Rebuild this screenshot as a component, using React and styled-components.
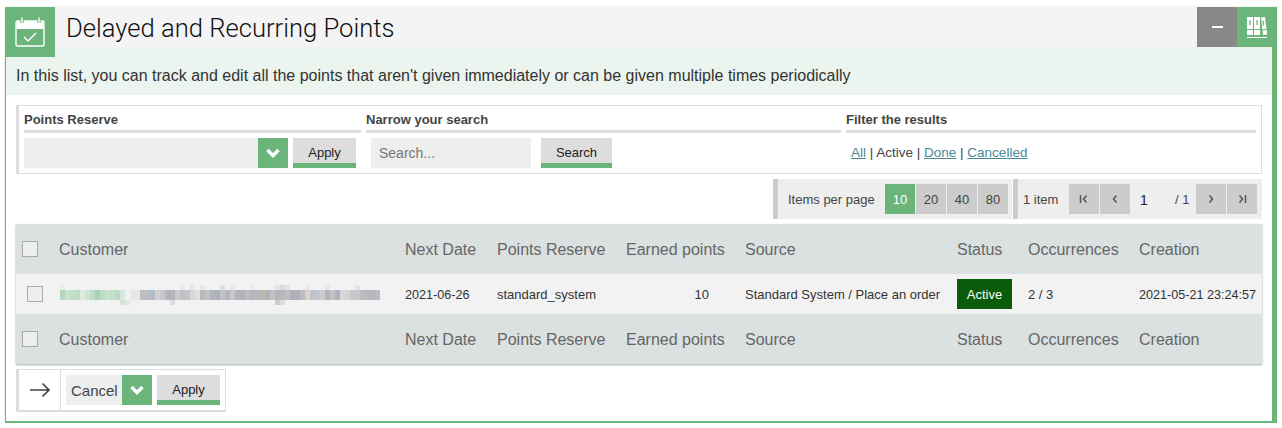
import styled, { createGlobalStyle } from "styled-components";

const green = "#6cb57a";

const GlobalStyle = createGlobalStyle`
  html, body {
    margin: 0;
    padding: 0;
    background: #fff;
    font-family: "Liberation Sans", Arial, sans-serif;
    color: #333;
  }
  * { box-sizing: border-box; }
`;

const columns = ["Customer", "Next Date", "Points Reserve", "Earned points", "Source", "Status", "Occurrences", "Creation"];

// the customer name is pixelated in the screenshot, one colour per 5px block
const blurTop = {
  0: "#e6efe8", 24: "#e8e8e8", 26: "#e4e4e6", 28: "#e6e6e8", 32: "#e2e2e4",
  34: "#e4e6ea", 38: "#ebebeb", 43: "#e4e4e8", 44: "#dadade", 45: "#e4e4e8",
  49: "#e8e8ea", 53: "#e6e8ec", 59: "#dfe3ea",
};
const blurMain = [
  "#b4d8bc", "#c8e3ce", "#c4e0cb", "#c0dcc8", "#dfeae1", "#cfe5d4", "#bedcc6", "#a9d3b4",
  "#bcdcc4", "#c8e2cf", "#c6e0cd", "#bedac6", "#d6e6e2", "#f2f2f2", "#e6e6e6", "#e6e8ea",
  "#c3bcba", "#b9bfc8", "#b3bbc6", "#d0cfce", "#c8c8cc", "#b4b4ba", "#b4b6bc", "#c4ccd2",
  "#c0c0c4", "#c8c4c2", "#d4d8de", "#dce0e4", "#bfbab8", "#c0c4c8", "#b2b5bc", "#acb2bc",
  "#c0c4ca", "#b8b8bc", "#c4c8cc", "#b2b4ba", "#b2b2b6", "#bcbcc0", "#b0b6be", "#b4b8c0",
  "#bcb8b2", "#b0b6c0", "#c0c2c4", "#b0b6bc", "#b8b8bc", "#bebebe", "#b0b0b6", "#aab0bc",
  "#bcbcc0", "#d8d4ce", "#c0c4c8", "#bfc8d2", "#c8ccd0", "#b8b4b2", "#c0c4c8", "#aeb4c0",
  "#d8d8da", "#d4d4d6", "#c8c8c8", "#c4c8cc", "#b8bcc4", "#bcb8b8", "#b4b8c0", "#b8bcc4",
];
const blurBottom = { 12: "#cfe4d6", 13: "#dbe9e2", 22: "#ddd", 43: "#ccc", 44: "#ddd" };

const BlurredName = () => (
  <svg width="320" height="20" viewBox="0 0 320 20" shapeRendering="crispEdges">
    {Object.entries(blurTop).map(([i, c]) => (
      <rect key={i} x={i * 5} y="0" width="5" height="5" fill={c} />
    ))}
    {blurMain.map((c, i) => (
      <rect key={i} x={i * 5} y="5" width="5" height="10" fill={c} />
    ))}
    {Object.entries(blurBottom).map(([i, c]) => (
      <rect key={i} x={i * 5} y="15" width="5" height="5" fill={c} />
    ))}
  </svg>
);

const CalendarIcon = () => (
  <svg width="30" height="30" viewBox="0 0 30 30" fill="none">
    <path d="M1.500 5.500a1.500 1.500 0 0 1 1.500-1.500h24a1.500 1.500 0 0 1 1.500 1.500v6.500h-27z" fill="#fff" />
    <rect x="1" y="4" width="28" height="25" rx="1.5" stroke="#fff" strokeWidth="1.4" />
    <path d="M7 1v5M24 1v5" stroke="#6cb57a" strokeWidth="3.4" />
    <path d="M7 1v4.500M24 1v4.500" stroke="#fff" strokeWidth="1.4" strokeLinecap="round" />
    <path d="M9 20l4 4 8-8" stroke="#fff" strokeWidth="1.5" />
  </svg>
);

const BooksIcon = () => (
  <svg width="20" height="21" viewBox="0 0 20 21">
    <path d="M0 0h6v12H0zM0 13h6v5H0zM7 0h6v12H7zM7 13h6v5H7z" fill="#fff" />
    <path d="M14 0.500l4-.5 1.600 12-4.200.6zM15.600 13.600l4.200-.6.200 4.600-4 .4z" fill="#fff" />
    <path d="M3 3v5M10 3v5M16 3.500l.6 5" stroke={green} strokeWidth="1.3" />
    <path d="M0 20.500h20" stroke="#fff" strokeWidth="1" />
  </svg>
);

const ChevronIcon = () => (
  <svg width="14" height="10" viewBox="0 0 14 10" fill="none" stroke="#fff" strokeWidth="3.400">
    <path d="M1.500 2l5.500 5.500L12.500 2" />
  </svg>
);

const PageIcon = ({ dir, end }) => (
  <svg width="10" height="10" viewBox="0 0 10 10" fill="none" stroke="#555" strokeWidth="1.5">
    <g transform={dir === "left" ? "" : "matrix(-1 0 0 1 10 0)"}>
      <path d={end ? "M7.500 1.500L4.500 5l3 3.500" : "M6.500 1.500L3.500 5l3 3.500"} />
      {end && <path d="M1.500 1v8" />}
    </g>
  </svg>
);

const ArrowIcon = () => (
  <svg width="22" height="16" viewBox="0 0 22 16" fill="none" stroke="#3f444b" strokeWidth="1.7">
    <path d="M1 8h19M13.500 1.500L20 8l-6.500 6.500" />
  </svg>
);

const Panel = styled.div`
  position: relative;
  width: 1272px;
  margin: 6px 0 0 5px;
  box-shadow: 0 1px 2px rgba(0, 0, 0, 0.15);
`;

const Header = styled.header`
  display: flex;
  align-items: stretch;
  height: 41px;
  padding-left: 61px;
  padding-top: 1px;
  background: #f4f4f4;
`;

const IconBadge = styled.div`
  position: absolute;
  left: 0;
  top: 1px;
  width: 50px;
  height: 50px;
  display: flex;
  align-items: center;
  justify-content: center;
  background: ${green};
`;

const Title = styled.h1`
  flex: 1;
  margin: 0;
  font-family: Roboto, "Liberation Sans", sans-serif;
  font-size: 25.6px;
  font-weight: 300;
  line-height: 43px;
  color: #111;
`;

const HeaderButton = styled.div`
  width: 40px;
  display: flex;
  align-items: center;
  justify-content: center;
  background: ${(p) => p.$bg};
`;

const Dash = styled.span`
  width: 11px;
  height: 2px;
  background: #fff;
`;

const Body = styled.div`
  height: 376px;
  border-left: 1px solid ${green};
  border-right: 5px solid ${green};
  border-bottom: 2px solid ${green};
  background: #fff;
`;

const Description = styled.p`
  margin: 0;
  height: 48px;
  padding-left: 10px;
  background: #ebf4ee;
  font-size: 16px;
  line-height: 58px;
  color: #333;
`;

const Content = styled.div`
  display: flex;
  flex-direction: column;
  padding: 10px 10px 0;
`;

const FilterBox = styled.section`
  display: flex;
  height: 69px;
  padding-left: 5px;
  border: 1px solid #ddd;
  border-left-width: 3px;
`;

const FilterColumn = styled.div`
  width: ${(p) => p.$width}px;
  margin-right: ${(p) => p.$gap || 0}px;
`;

const FilterHeading = styled.h3`
  height: 27px;
  margin: 0;
  padding-top: 1px;
  border-bottom: 3px solid #ddd;
  font-size: 13px;
  line-height: 26px;
  font-weight: 700;
  color: #444;
`;

const FilterRow = styled.div`
  display: flex;
  align-items: center;
  padding-top: 5px;
  padding-left: ${(p) => p.$inset || 0}px;
`;

const SelectField = styled.div`
  width: ${(p) => p.$width}px;
  height: 30px;
  display: flex;
  align-items: center;
  padding-left: 5px;
  background: #eee;
  font-size: 15px;
  color: #444;
`;

const Chevron = styled.div`
  width: 30px;
  height: 30px;
  display: flex;
  align-items: center;
  justify-content: center;
  background: ${green};
`;

const Button = styled.button`
  width: ${(p) => p.$width}px;
  height: 30px;
  margin-left: ${(p) => p.$left}px;
  padding: 3px 0 0;
  border: 0;
  border-bottom: 5px solid ${green};
  background: #ddd;
  font-family: inherit;
  font-size: 13px;
  color: #222;
`;

const SearchInput = styled.div`
  width: 160px;
  height: 30px;
  padding: 1px 0 0 8px;
  background: #eee;
  font-size: 14px;
  line-height: 29px;
  color: #777;
`;

const Links = styled.div`
  padding: 12px 0 0 5px;
  font-size: 13.5px;
  line-height: 16px;
  color: #444;
  a {
    color: #4a8a96;
    text-decoration: underline;
  }
`;

const Pager = styled.div`
  display: flex;
  justify-content: flex-end;
  margin-top: 5px;
`;

const PagerBlock = styled.div`
  display: flex;
  align-items: center;
  width: ${(p) => p.$width}px;
  margin-left: ${(p) => p.$left || 0}px;
  height: 40px;
  padding-left: ${(p) => p.$pad}px;
  border-left: 5px solid #ccc;
  background: #eee;
  font-size: 13px;
  color: #444;
`;

const PagerLabel = styled.span`
  width: ${(p) => p.$width}px;
  padding-top: 1px;
`;

const PageNumber = styled(PagerLabel)`
  padding-left: 9px;
  font-size: 14px;
  color: #222;
`;

const PageButton = styled.div`
  width: 30px;
  height: 30px;
  margin-right: 1px;
  display: flex;
  align-items: center;
  justify-content: center;
  background: ${(p) => (p.$active ? green : "#ccc")};
  color: ${(p) => (p.$active ? "#fff" : "#444")};
  font-size: 13px;
`;

const Table = styled.table`
  width: 1246px;
  margin-top: 5px;
  border-collapse: collapse;
  table-layout: fixed;
  box-shadow: 0 1px 2px rgba(0, 0, 0, 0.35);
`;

const Col = styled.col`
  width: ${(p) => p.$width}px;
`;

const HeadRow = styled.tr`
  height: 50px;
  background: #dbe0e0;
  font-size: 16px;
  color: #666;
`;

const DataRow = styled.tr`
  height: 40px;
  background: #f2f2f2;
  font-size: 13px;
  color: #333;
`;

const Cell = styled.td`
  padding: 1px 0 0;
  font-weight: 400;
  text-align: left;
  white-space: nowrap;
`;

const DateCell = styled(Cell)`
  font-size: 12.6px;
`;

const NumberCell = styled(Cell)`
  padding-right: 36px;
  text-align: right;
`;

const CheckCell = styled(Cell)`
  padding: 0 0 0 ${(p) => p.$inset}px;
`;

const NameWrap = styled.div`
  display: flex;
  padding: 2px 0 0 1px;
`;

const Checkbox = styled.div`
  width: 16px;
  height: 16px;
  border: 1px solid #aaa;
  background: #eee;
`;

const StatusBadge = styled.span`
  display: inline-flex;
  align-items: center;
  justify-content: center;
  width: 55px;
  height: 30px;
  background: #0a5c0a;
  color: #fff;
`;

const ActionBar = styled.div`
  display: flex;
  align-items: center;
  width: 210px;
  height: 43px;
  margin-top: 5px;
  border: 1px solid #ddd;
  border-left-width: 3px;
  border-bottom-width: 2px;
`;

const ArrowCell = styled.div`
  width: 42px;
  height: 100%;
  display: flex;
  align-items: center;
  justify-content: center;
  margin-right: 5px;
  border-right: 1px solid #ddd;
`;

const Head = () => (
  <HeadRow>
    <CheckCell $inset={6}>
      <Checkbox />
    </CheckCell>
    {columns.map((label) => (
      <Cell as="th" key={label}>
        {label}
      </Cell>
    ))}
  </HeadRow>
);

export default function App() {
  return (
    <>
      <GlobalStyle />
      <Panel>
        <IconBadge>
          <CalendarIcon />
        </IconBadge>
        <Header>
          <Title>Delayed and Recurring Points</Title>
          <HeaderButton $bg="#888">
            <Dash />
          </HeaderButton>
          <HeaderButton $bg={green}>
            <BooksIcon />
          </HeaderButton>
        </Header>
        <Body>
          <Description>
            In this list, you can track and edit all the points that aren't given immediately or can be given multiple
            times periodically
          </Description>
          <Content>
            <FilterBox>
              <FilterColumn $width={337} $gap={5}>
                <FilterHeading>Points Reserve</FilterHeading>
                <FilterRow>
                  <SelectField $width={234} />
                  <Chevron>
                    <ChevronIcon />
                  </Chevron>
                  <Button $width={63} $left={5}>
                    Apply
                  </Button>
                </FilterRow>
              </FilterColumn>
              <FilterColumn $width={475} $gap={5}>
                <FilterHeading>Narrow your search</FilterHeading>
                <FilterRow $inset={5}>
                  <SearchInput>Search...</SearchInput>
                  <Button $width={71} $left={10}>
                    Search
                  </Button>
                </FilterRow>
              </FilterColumn>
              <FilterColumn $width={410}>
                <FilterHeading>Filter the results</FilterHeading>
                <Links>
                  <a>All</a> | Active | <a>Done</a> | <a>Cancelled</a>
                </Links>
              </FilterColumn>
            </FilterBox>
            <Pager>
              <PagerBlock $width={239} $pad={10}>
                <PagerLabel $width={97}>Items per page</PagerLabel>
                <PageButton $active>10</PageButton>
                <PageButton>20</PageButton>
                <PageButton>40</PageButton>
                <PageButton>80</PageButton>
              </PagerBlock>
              <PagerBlock $width={249} $left={1} $pad={5}>
                <PagerLabel $width={46}>1 item</PagerLabel>
                <PageButton>
                  <PageIcon dir="left" end />
                </PageButton>
                <PageButton>
                  <PageIcon dir="left" />
                </PageButton>
                <PageNumber $width={44}>1</PageNumber>
                <PagerLabel $width={21}>/ 1</PagerLabel>
                <PageButton>
                  <PageIcon dir="right" />
                </PageButton>
                <PageButton>
                  <PageIcon dir="right" end />
                </PageButton>
              </PagerBlock>
            </Pager>
            <Table>
              <colgroup>
                <Col $width={43} />
                <Col $width={346} />
                <Col $width={92} />
                <Col $width={129} />
                <Col $width={119} />
                <Col $width={212} />
                <Col $width={71} />
                <Col $width={111} />
                <Col $width={123} />
              </colgroup>
              <thead>
                <Head />
              </thead>
              <tbody>
                <DataRow>
                  <CheckCell $inset={11}>
                    <Checkbox />
                  </CheckCell>
                  <CheckCell $inset={0}>
                    <NameWrap>
                      <BlurredName />
                    </NameWrap>
                  </CheckCell>
                  <DateCell>2021-06-26</DateCell>
                  <Cell>standard_system</Cell>
                  <NumberCell>10</NumberCell>
                  <Cell>Standard System / Place an order</Cell>
                  <CheckCell $inset={0}>
                    <StatusBadge>Active</StatusBadge>
                  </CheckCell>
                  <Cell>2 / 3</Cell>
                  <DateCell>2021-05-21 23:24:57</DateCell>
                </DataRow>
              </tbody>
              <tfoot>
                <Head />
              </tfoot>
            </Table>
            <ActionBar>
              <ArrowCell>
                <ArrowIcon />
              </ArrowCell>
              <SelectField $width={56}>Cancel</SelectField>
              <Chevron>
                <ChevronIcon />
              </Chevron>
              <Button $width={63} $left={5}>
                Apply
              </Button>
            </ActionBar>
          </Content>
        </Body>
      </Panel>
    </>
  );
}
